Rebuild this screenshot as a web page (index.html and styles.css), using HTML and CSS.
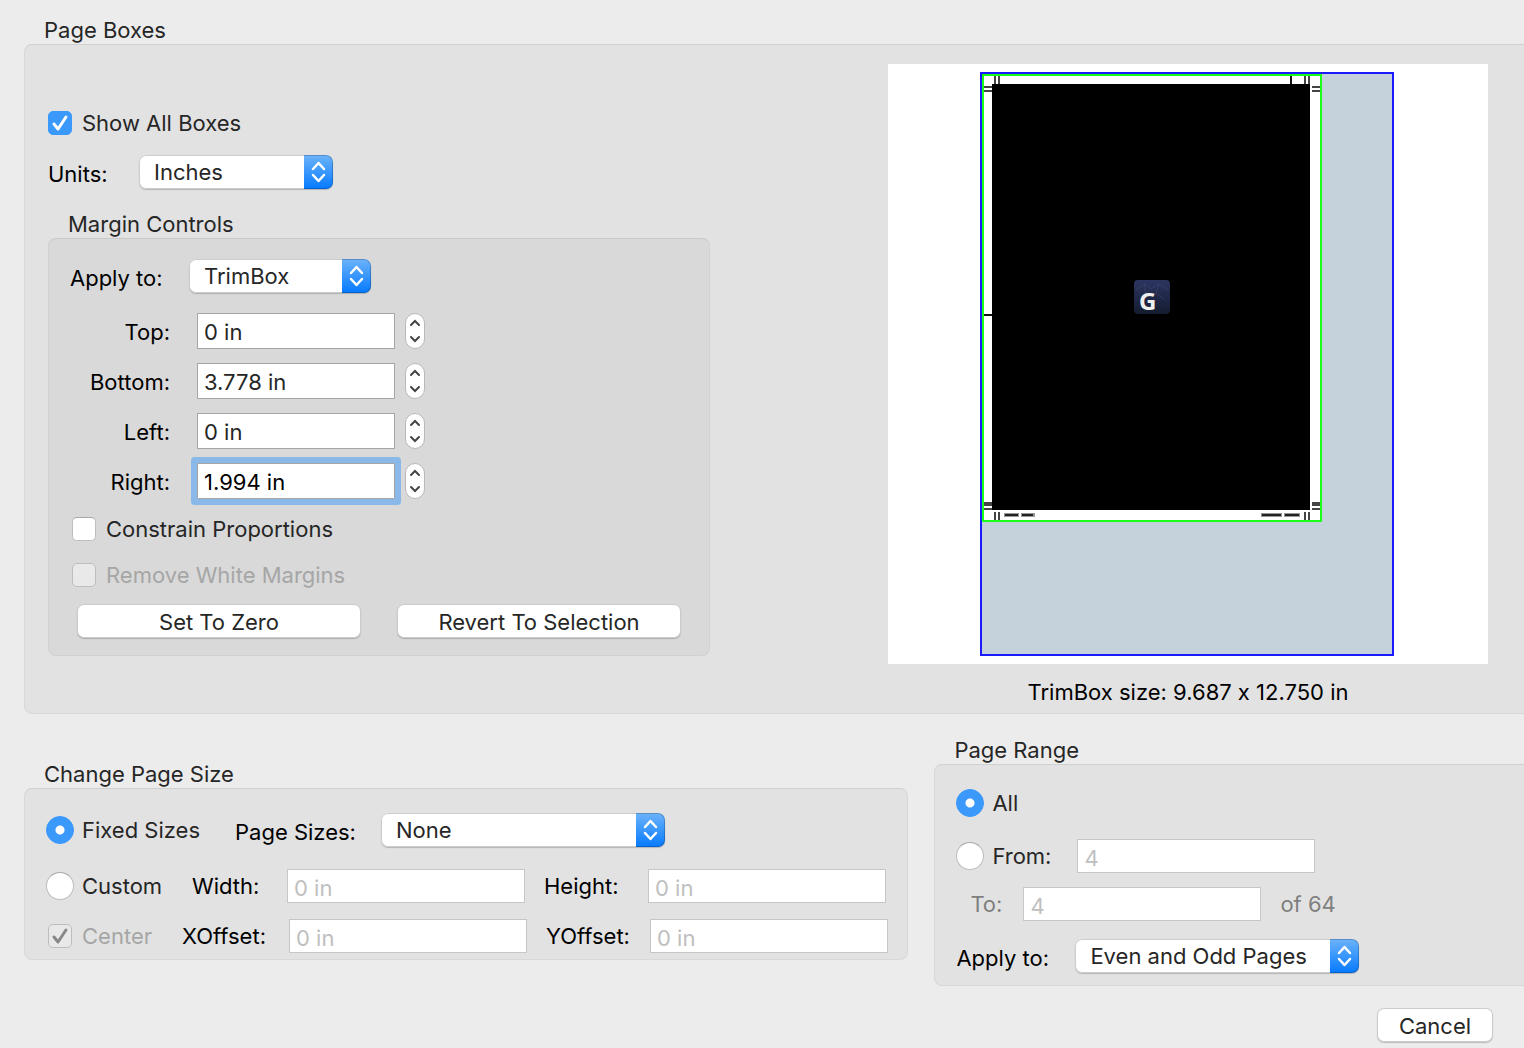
FILE: index.html
```html
<!DOCTYPE html>
<html lang="en">
<head>
    <meta charset="UTF-8">
    <meta name="viewport" content="width=device-width, initial-scale=1.0">
    <title>Page Boxes</title>
    <link rel="stylesheet" href="styles.css">
</head>
<body>
    <form class="dialog">
        <!-- Page boxes -->
        <section>
            <h2>Page Boxes</h2>
            <div class="group page-boxes">
                <div class="settings">
                    <label class="choice"><input type="checkbox" checked> Show All Boxes</label>
                    <div class="row units-row">
                        <label for="units">Units:</label>
                        <select id="units" class="select-units">
                            <option>Inches</option>
                            <option>Points</option>
                        </select>
                    </div>

                    <h3>Margin Controls</h3>
                    <div class="group margins">
                        <div class="row apply-row">
                            <label for="applyBox">Apply to:</label>
                            <select id="applyBox" class="select-box">
                                <option>TrimBox</option>
                                <option>CropBox</option>
                            </select>
                        </div>
                        <div class="margin-fields">
                            <div class="row">
                                <label for="top">Top:</label>
                                <input type="text" id="top" value="0 in">
                                <span class="stepper"><button type="button" class="up" aria-label="Increase top"></button><button type="button" class="down" aria-label="Decrease top"></button></span>
                            </div>
                            <div class="row">
                                <label for="bottom">Bottom:</label>
                                <input type="text" id="bottom" value="3.778 in">
                                <span class="stepper"><button type="button" class="up" aria-label="Increase bottom"></button><button type="button" class="down" aria-label="Decrease bottom"></button></span>
                            </div>
                            <div class="row">
                                <label for="left">Left:</label>
                                <input type="text" id="left" value="0 in">
                                <span class="stepper"><button type="button" class="up" aria-label="Increase left"></button><button type="button" class="down" aria-label="Decrease left"></button></span>
                            </div>
                            <div class="row">
                                <label for="right">Right:</label>
                                <input type="text" id="right" class="active" value="1.994 in">
                                <span class="stepper"><button type="button" class="up" aria-label="Increase right"></button><button type="button" class="down" aria-label="Decrease right"></button></span>
                            </div>
                        </div>
                        <div class="options">
                            <label class="choice"><input type="checkbox"> Constrain Proportions</label>
                            <label class="choice off"><input type="checkbox" disabled> Remove White Margins</label>
                        </div>
                        <div class="buttons">
                            <button type="button" class="btn">Set To Zero</button>
                            <button type="button" class="btn">Revert To Selection</button>
                        </div>
                    </div>
                </div>

                <div class="preview">
                    <svg viewBox="0 0 600 600" role="img" aria-label="Page preview">
                        <defs>
                            <linearGradient id="tile" x1="0" y1="0" x2="0" y2="1">
                                <stop offset="0" stop-color="#2c3560"/>
                                <stop offset="1" stop-color="#141c30"/>
                            </linearGradient>
                        </defs>
                        <rect width="600" height="600" fill="#fff"/>
                        <rect x="93" y="9" width="412" height="582" fill="#c6d2db" stroke="#1a1aff" stroke-width="2"/>
                        <rect x="95" y="11" width="338" height="446" fill="#fff"/>
                        <rect x="104" y="20" width="318" height="426"/>
                        <!-- printer marks -->
                        <g fill="#444">
                            <path d="M106 12h2v8h-2zM110 12h2v8h-2zM96 22h8v2h-8zM96 26h8v2h-8z"/>
                            <path d="M416 12h2v8h-2zM420 12h2v8h-2zM424 22h8v2h-8zM424 26h8v2h-8z"/>
                            <path d="M96 438h8v4h-8zM96 444h8v2h-8zM106 448h2v8h-2zM110 448h2v8h-2z"/>
                            <path d="M424 438h8v4h-8zM424 444h8v2h-8zM416 448h2v8h-2zM420 448h2v8h-2z"/>
                            <path fill="#111" d="M402 12h2v8h-2zM96 250h8v2h-8z"/>
                        </g>
                        <g fill="none">
                            <path stroke="#999" stroke-width="4" d="M116 451h15M133 451h14M373 451h21M396 451h16"/>
                            <path stroke="#222" stroke-width="2" d="M117 451h13M134 451h11M374 451h19M397 451h14"/>
                        </g>
                        <rect x="246" y="216" width="36" height="34" rx="4" fill="url(#tile)"/>
                        <path d="M248 226l8-6 7 5 8-5 9 6M256 220l2 10M271 220l-3 9 8 6" fill="none" stroke="#414b79" opacity=".5"/>
                        <text x="251" y="246" class="tile-letter">G</text>
                        <rect x="95" y="11" width="338" height="446" fill="none" stroke="#1aff1a" stroke-width="2"/>
                    </svg>
                    <p>TrimBox size: 9.687 x 12.750 in</p>
                </div>
            </div>
        </section>

        <div class="lower">
            <!-- Page size -->
            <section class="size-section">
                <h2>Change Page Size</h2>
                <div class="group page-size">
                    <div class="row size-row">
                        <label class="choice"><input type="radio" name="size" checked> Fixed Sizes</label>
                        <label for="pageSizes">Page Sizes:</label>
                        <select id="pageSizes" class="select-wide">
                            <option>None</option>
                            <option>Letter</option>
                        </select>
                    </div>
                    <div class="row custom-row">
                        <label class="choice"><input type="radio" name="size"> Custom</label>
                        <label for="width">Width:</label>
                        <input type="text" id="width" value="0 in" disabled>
                        <label for="height" class="second">Height:</label>
                        <input type="text" id="height" value="0 in" disabled>
                    </div>
                    <div class="row offset-row">
                        <label class="choice off"><input type="checkbox" checked disabled> Center</label>
                        <label for="xoffset">XOffset:</label>
                        <input type="text" id="xoffset" value="0 in" disabled>
                        <label for="yoffset" class="second">YOffset:</label>
                        <input type="text" id="yoffset" value="0 in" disabled>
                    </div>
                </div>
            </section>

            <!-- Page range -->
            <section>
                <h2>Page Range</h2>
                <div class="group page-range">
                    <div class="row">
                        <label class="choice"><input type="radio" name="range" checked> All</label>
                    </div>
                    <div class="row from-row">
                        <label class="choice"><input type="radio" name="range" id="rangeFrom"> From:</label>
                        <input type="text" aria-label="From page" value="4" disabled>
                    </div>
                    <div class="row to-row">
                        <label for="to">To:</label>
                        <input type="text" id="to" value="4" disabled>
                        <span>of 64</span>
                    </div>
                    <div class="row pages-row">
                        <label for="applyPages">Apply to:</label>
                        <select id="applyPages" class="select-wide">
                            <option>Even and Odd Pages</option>
                            <option>Even Pages Only</option>
                            <option>Odd Pages Only</option>
                        </select>
                    </div>
                </div>
            </section>
        </div>

        <div class="footer">
            <button type="button" class="btn">Cancel</button>
        </div>
    </form>
</body>
</html>
```
FILE: styles.css
```css
* {
    box-sizing: border-box;
}
body {
    margin: 0;
    background-color: #ececec;
    color: #262626;
    font-family: Inter, "Liberation Sans", sans-serif;
    font-size: 22px;
    font-variant-ligatures: no-contextual;
    line-height: 28px;
    overflow-x: hidden;
}
input, select, button {
    font: inherit;
    color: inherit;
    margin: 0;
}
.dialog {
    padding: 16px 0 6px 24px;
}
h2, h3 {
    margin: 0;
    padding-left: 20px;
    font-size: 22px;
    font-weight: normal;
}
.group {
    background-color: #e2e2e2;
    border: 1px solid #d8d8d8;
    border-top-color: #d0d0d0;
    border-radius: 8px;
}
.page-boxes, .page-range {
    border-right: none;
    border-radius: 8px 0 0 8px;
}
.page-boxes {
    display: flex;
    justify-content: space-between;
    padding: 19px 36px 7px 23px;
}
.settings {
    padding-top: 41px;
}

/* rows and labels */
.row {
    display: flex;
    align-items: center;
}
.row > label {
    flex: none;
    color: #000;
}
.units-row > label, .apply-row > label, .size-row > label, .pages-row > label {
    padding-top: 4px;
}
.choice, .row > .choice {
    display: flex;
    align-items: center;
    gap: 10px;
    height: 36px;
    padding-top: 0;
    color: #262626;
}
.row > .choice {
    gap: 8px;
    height: 34px;
}
.choice.off, .row > .choice.off {
    color: #a6a6a6;
}
.units-row {
    margin-top: 14px;
}
.units-row label {
    width: 91px;
}
h3 {
    margin-top: 21px;
}

/* margin controls */
.margins {
    width: 662px;
    max-width: 100%;
    padding: 20px 28px 17px 21px;
    background-color: #d9d9d9;
    border-color: #d1d1d1;
    border-top-color: #c8c8c8;
}
.apply-row label {
    width: 119px;
}
.margin-fields {
    display: flex;
    flex-direction: column;
    gap: 14px;
    margin-top: 20px;
}
.margin-fields label {
    width: 100px;
    margin-right: 27px;
    padding-top: 2px;
    text-align: right;
}
.options {
    display: flex;
    flex-direction: column;
    gap: 10px;
    margin: 12px 0 11px 2px;
}
.buttons {
    display: flex;
    gap: 36px;
    padding-left: 7px;
}
.buttons .btn {
    flex: 1;
}

/* controls */
input[type="text"] {
    width: 238px;
    height: 34px;
    padding: 2px 6px 0;
    background-color: #fff;
    border: 1px solid #a6a6a6;
    border-radius: 0;
    outline: none;
}
.margin-fields input[type="text"] {
    width: 198px;
    height: 36px;
    margin-right: 10px;
}
input[type="text"]:disabled {
    padding-top: 4px;
    border-color: #c6c6c6;
    color: #bfbfbf;
}
input[type="text"].active {
    box-shadow: 0 0 0 6px #8ab8e8;
    border-radius: 1px;
    color: #000;
}
input[type="checkbox"], input[type="radio"] {
    appearance: none;
    flex: none;
    width: 24px;
    height: 24px;
    background: #fff center no-repeat;
    border: 1px solid #bdbdbd;
    border-top-color: #a8a8a8;
    border-radius: 5px;
}
input[type="radio"] {
    width: 28px;
    height: 28px;
    border-radius: 50%;
}
input[type="checkbox"]:checked {
    background-color: #3b99fc;
    background-image: url("data:image/svg+xml,%3Csvg xmlns='http://www.w3.org/2000/svg' width='24' height='24'%3E%3Cpath d='M6 13l4 5 8-12' fill='none' stroke='white' stroke-width='3' stroke-linecap='round' stroke-linejoin='round'/%3E%3C/svg%3E");
    border-color: #3b99fc;
}
input[type="checkbox"]:disabled {
    background-color: #e9e9e9;
    border-color: #bdbdbd;
}
input[type="checkbox"]:checked:disabled {
    background-image: url("data:image/svg+xml,%3Csvg xmlns='http://www.w3.org/2000/svg' width='24' height='24'%3E%3Cpath d='M6 13l4 5 8-12' fill='none' stroke='%23888' stroke-width='3' stroke-linecap='round' stroke-linejoin='round'/%3E%3C/svg%3E");
}
input[type="radio"]:checked {
    background-color: #3b99fc;
    background-image: radial-gradient(circle, #fff 4px, transparent 5px);
    border-color: #3b99fc;
}
.row > .choice input[type="checkbox"] {
    margin: 0 2px;
}
select {
    appearance: none;
    height: 34px;
    padding: 0 36px 0 15px;
    background-color: #fff;
    background-image: url("data:image/svg+xml,%3Csvg xmlns='http://www.w3.org/2000/svg' width='29' height='34'%3E%3Cpath d='M9 14l5.500-6 5.500 6M9 20l5.500 6 5.500-6' fill='none' stroke='white' stroke-width='2.500' stroke-linecap='round' stroke-linejoin='round'/%3E%3C/svg%3E"), linear-gradient(#6cb3fa, #067aff);
    background-position: right top;
    background-repeat: no-repeat;
    background-size: 29px 34px;
    border: none;
    border-radius: 7px;
    box-shadow: inset 0 0 0 1px rgba(0, 0, 0, 0.2), 0 1px 1px rgba(0, 0, 0, 0.2);
}
.select-units {
    width: 194px;
}
.select-box {
    width: 182px;
}
.select-wide {
    width: 284px;
}
.btn {
    height: 34px;
    padding: 2px 0 0;
    background-color: #fff;
    border: none;
    border-radius: 7px;
    box-shadow: inset 0 0 0 1px rgba(0, 0, 0, 0.2), 0 1px 1px rgba(0, 0, 0, 0.2);
}
.stepper {
    display: flex;
    flex-direction: column;
    width: 20px;
    height: 36px;
    overflow: hidden;
    background-color: #fff;
    border: 1px solid #b9b9b9;
    border-radius: 10px;
}
.stepper button {
    flex: 1;
    padding: 0;
    background: center no-repeat;
    border: none;
}
.stepper .up {
    background-image: url("data:image/svg+xml,%3Csvg xmlns='http://www.w3.org/2000/svg' width='12' height='9'%3E%3Cpath d='M2 7l4-4 4 4' fill='none' stroke='%23444' stroke-width='2' stroke-linecap='round'/%3E%3C/svg%3E");
}
.stepper .down {
    background-image: url("data:image/svg+xml,%3Csvg xmlns='http://www.w3.org/2000/svg' width='12' height='9'%3E%3Cpath d='M2 2l4 4 4-4' fill='none' stroke='%23444' stroke-width='2' stroke-linecap='round'/%3E%3C/svg%3E");
}

/* preview */
.preview {
    width: 600px;
}
.preview svg {
    display: block;
    width: 100%;
}
.preview p {
    margin: 14px 0 0;
    color: #000;
    text-align: center;
}
.tile-letter {
    fill: #eee;
    font-family: "Open Sans", sans-serif;
    font-size: 24px;
    font-weight: bold;
}

/* page size and page range */
.lower {
    display: grid;
    grid-template-columns: 3fr 2fr;
    align-items: start;
    gap: 26px;
    margin-top: 22px;
}
.size-section {
    padding-top: 24px;
}
.page-size {
    padding: 24px 18px 6px 21px;
}
.size-row .choice {
    width: 189px;
}
.size-row label:not(.choice) {
    width: 146px;
}
.custom-row {
    margin-top: 22px;
}
.custom-row .choice {
    width: 146px;
}
.custom-row label:not(.choice) {
    width: 95px;
}
.offset-row {
    margin-top: 16px;
}
.offset-row .choice {
    width: 136px;
}
.offset-row label:not(.choice) {
    width: 107px;
}
.row > label.second:not(.choice) {
    width: 104px;
    margin-left: 19px;
}
.page-range {
    padding: 21px 20px 12px 21px;
}
.from-row {
    margin-top: 19px;
}
.from-row .choice {
    width: 121px;
}
.to-row {
    margin-top: 14px;
    padding-left: 14px;
    color: #7f7f7f;
}
.to-row > label {
    width: 53px;
    color: #7f7f7f;
}
.to-row span {
    margin-left: 19px;
}
.pages-row {
    margin-top: 18px;
}
.pages-row label {
    width: 119px;
}
.footer {
    display: flex;
    justify-content: flex-end;
    margin-top: 22px;
    padding-right: 31px;
}
.footer .btn {
    width: 116px;
}
```
